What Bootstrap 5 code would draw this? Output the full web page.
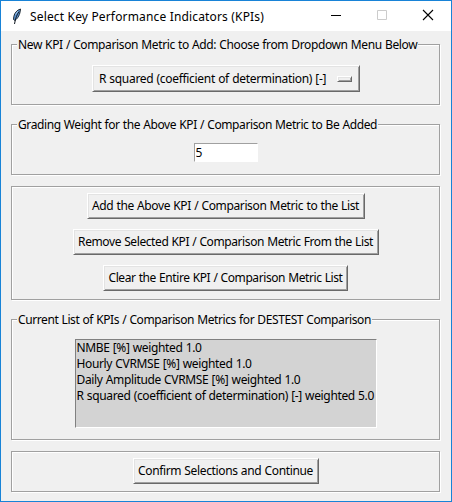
<!DOCTYPE html>
<html lang="en">
<head>
<meta charset="utf-8">
<meta name="viewport" content="width=device-width, initial-scale=1">
<title>Select Key Performance Indicators (KPIs)</title>
<link href="https://cdn.jsdelivr.net/npm/bootstrap@5.3.0/dist/css/bootstrap.min.css" rel="stylesheet">
<style>
  body { font: 12px/16px "Noto Sans", "Open Sans", sans-serif; letter-spacing: -.37px; word-spacing: .4px; color: #000; background: #f0f0f0; white-space: nowrap; }
  .window { width: 452px; height: 502px; border: 1px solid #1883d7; background: #f0f0f0; }
  .titlebar { height: 30px; padding-left: 8px; letter-spacing: .16px; word-spacing: 0; }
  .title-text { margin-left: 5px; padding-top: 2px; }
  .caption-btn { width: 46px; height: 30px; }
  .groups { padding: 13px 11px 0 10px; }
  /* etched group frame */
  .group-frame { border: 1px solid #a0a0a0; box-shadow: 1px 1px 0 #fff, inset 1px 1px 0 #fff; }
  .group-title { height: 16px; margin: -8px 0 0 5px; padding: 0 1px; background: #f0f0f0; }
  .h-choose { height: 61px; margin-bottom: 19px; }
  .h-weight { height: 51px; margin-bottom: 11px; }
  .h-actions { height: 114px; margin-bottom: 19px; padding-top: 6px; gap: 10px; }
  .h-list { height: 121px; margin-bottom: 11px; }
  .h-confirm { height: 41px; padding-top: 6px; }
  .tk-btn { height: 26px; padding: 0; border: 1px solid; border-color: #fff #696969 #696969 #fff; border-radius: 0; background: #f0f0f0; box-shadow: inset 1px 1px 0 #e3e3e3, inset -1px -1px 0 #a0a0a0; font: inherit; letter-spacing: inherit; word-spacing: inherit; color: #000; }
  .tk-option { width: 268px; height: 27px; margin: 12px 0 0 1px; padding: 0 7px 0 6px; letter-spacing: -.31px; }
  .indicator { width: 15px; height: 6px; border: 1px solid; border-color: #fff #696969 #696969 #fff; box-shadow: inset 1px 1px 0 #e3e3e3, inset -1px -1px 0 #a0a0a0; }
  .w-add { width: 278px; letter-spacing: -.36px; }
  .w-remove { width: 306px; letter-spacing: -.4px; }
  .w-clear { width: 245px; letter-spacing: -.41px; }
  .w-confirm { width: 186px; letter-spacing: -.35px; }
  .t-weight { letter-spacing: -.395px; }
  .t-list { letter-spacing: -.4px; }
  .tk-entry { width: 64px; height: 19px; margin-top: 10px; padding: 0 1px; border: 1px solid; border-color: #a0a0a0 #fff #fff #a0a0a0; border-radius: 0; background: #fff; font: inherit; color: #000; }
  .tk-list { width: 302px; height: 89px; margin-top: 11px; padding-left: 1px; border: 1px solid; border-color: #808080 #fff #fff #808080; background: #d3d3d3; letter-spacing: -.35px; }
</style>
<script src="https://cdn.jsdelivr.net/npm/bootstrap@5.3.0/dist/js/bootstrap.bundle.min.js"></script>
</head>
<body class="m-0 overflow-hidden">
<div class="window">
  <header class="titlebar d-flex align-items-center bg-white">
    <svg width="16" height="18" viewBox="0 0 16 18">
      <path d="M11.500 2C8 3 5.500 6 4.800 9.500l-.3 3 1.500 1c3-2.500 5-5.500 5.500-11.500z" fill="#5b93d3" stroke="#101820" stroke-width=".9"/>
      <path d="M10 4.500C7.800 8 6.500 11 5.500 17" fill="none" stroke="#101820"/>
      <path d="M9 4L6.500 7.500" stroke="#b9d6f2" stroke-width=".8"/>
    </svg>
    <span class="title-text me-auto">Select Key Performance Indicators (KPIs)</span>
    <svg class="caption-btn" viewBox="0 0 46 30"><path d="M18 14.500h10" stroke="#000"/></svg>
    <svg class="caption-btn" viewBox="0 0 46 30"><path d="M18.500 9.500h9v9h-9z" fill="none" stroke="#ccc"/></svg>
    <svg class="caption-btn" viewBox="0 0 46 30"><path d="M18 9l10 10M28 9L18 19" stroke="#000" stroke-width="1.100"/></svg>
  </header>
  <main class="groups">
    <section class="group-frame h-choose d-flex flex-column align-items-center">
      <div class="group-title align-self-start">New KPI / Comparison Metric to Add: Choose from Dropdown Menu Below</div>
      <button class="btn tk-btn tk-option d-flex align-items-center justify-content-between">R squared (coefficient of determination) [-]<span class="indicator"></span></button>
    </section>
    <section class="group-frame h-weight d-flex flex-column align-items-center">
      <div class="group-title t-weight align-self-start">Grading Weight for the Above KPI / Comparison Metric to Be Added</div>
      <input class="form-control tk-entry" type="text" value="5" aria-label="Weight">
    </section>
    <section class="group-frame h-actions d-flex flex-column align-items-center">
      <button class="btn tk-btn w-add">Add the Above KPI / Comparison Metric to the List</button>
      <button class="btn tk-btn w-remove">Remove Selected KPI / Comparison Metric From the List</button>
      <button class="btn tk-btn w-clear">Clear the Entire KPI / Comparison Metric List</button>
    </section>
    <section class="group-frame h-list d-flex flex-column align-items-center">
      <div class="group-title t-list align-self-start">Current List of KPIs / Comparison Metrics for DESTEST Comparison</div>
      <ul class="tk-list list-unstyled mb-0">
        <li>NMBE [%] weighted 1.0</li>
        <li>Hourly CVRMSE [%] weighted 1.0</li>
        <li>Daily Amplitude CVRMSE [%] weighted 1.0</li>
        <li>R squared (coefficient of determination) [-] weighted 5.0</li>
      </ul>
    </section>
    <section class="group-frame h-confirm d-flex flex-column align-items-center">
      <button class="btn tk-btn w-confirm">Confirm Selections and Continue</button>
    </section>
  </main>
</div>
</body>
</html>
